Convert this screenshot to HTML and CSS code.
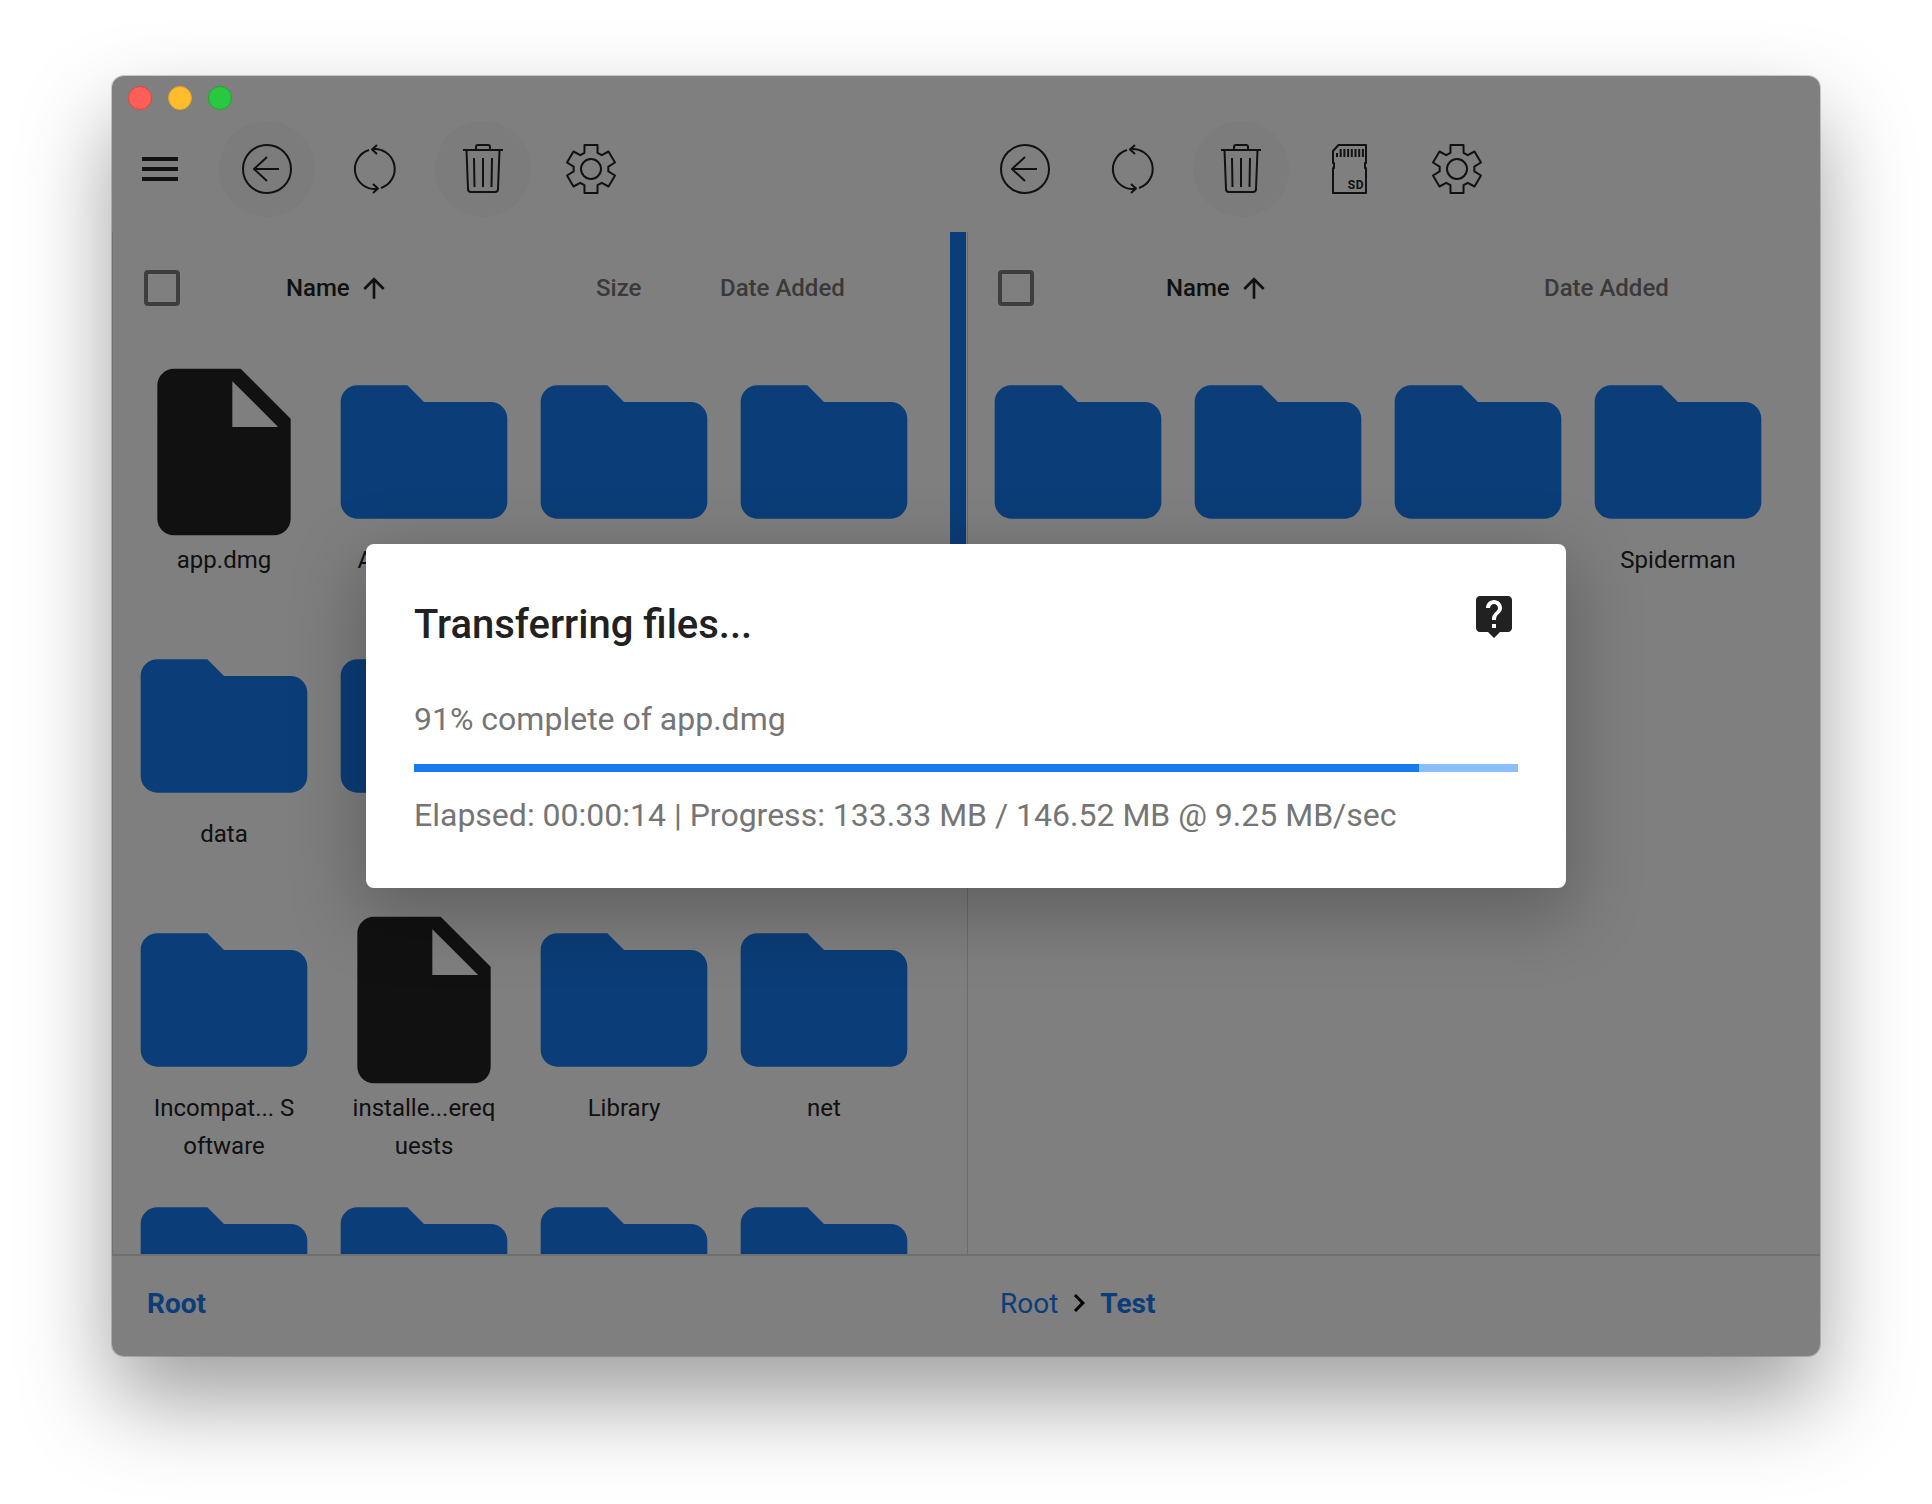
FILE: index.html
```html
<!DOCTYPE html>
<html lang="en">
<head>
    <meta charset="UTF-8">
    <title>Transferring files</title>
    <link rel="stylesheet" href="styles.css">
</head>
<body>
    <svg class="sprite" xmlns="http://www.w3.org/2000/svg">
        <symbol id="folder" viewBox="0 0 24 24"><path d="M10 4H4c-1.1 0-2 .9-2 2v12c0 1.1.9 2 2 2h16c1.1 0 2-.9 2-2V8c0-1.1-.9-2-2-2h-8z"/></symbol>
        <symbol id="file" viewBox="0 0 24 24"><path d="M6 2c-1.1 0-2 .9-2 2v16c0 1.1.9 2 2 2h12c1.1 0 2-.9 2-2V8l-6-6H6zm7 7V3.5L18.5 9H13z"/></symbol>
        <symbol id="arrow-up" viewBox="0 0 24 24"><path d="M4 12l1.41 1.41L11 7.83V20h2V7.83l5.58 5.59L20 12l-8-8-8 8z"/></symbol>
        <symbol id="back" viewBox="0 0 50 50"><g class="line"><circle cx="25" cy="25" r="24"/><path d="M37 25H12M25 13L12 25l13 12"/></g></symbol>
        <symbol id="refresh" viewBox="0 0 50 50"><g class="line"><path d="M22 5.200A20 20 0 0 1 31 44"/><path d="M27 45A20 20 0 0 1 19 6"/><path d="M27 1l-5 4.400 5 4.600M23 40l5 4.600-5 4.400"/></g></symbol>
        <symbol id="trash" viewBox="0 0 50 50"><g class="line"><path d="M5 6H45M18 5V3a2 2 0 0 1 2-2h10a2 2 0 0 1 2 2v2"/><path d="M8.500 6l1.500 39a3 3 0 0 0 3 3h24a3 3 0 0 0 3-3l1.500-39"/><path d="M16 14l.5 29M25 14v29M34 14l-.5 29"/></g></symbol>
        <symbol id="gear" viewBox="-25 -25 50 50"><g class="line"><path d="M-6.500-24H6.500L6.560-16.230 10.770-13.790 17.500-17.500 24-6.500 17.330-2.440V2.440L24 6.500 17.500 17.500 10.770 13.790 6.560 16.230 6.500 24H-6.500L-6.560 16.230-10.770 13.790-17.500 17.500-24 6.500-17.330 2.440V-2.440L-24-6.500-17.500-17.500-10.770-13.790-6.560-16.230Z"/><circle r="10"/></g></symbol>
        <symbol id="next" viewBox="0 0 24 24"><path d="M10 6L8.590 7.410 13.170 12l-4.580 4.590L10 18l6-6z"/></symbol>
        <symbol id="help" viewBox="0 0 24 24"><path d="M19 2H5c-1.110 0-2 .9-2 2v14c0 1.100.89 2 2 2h4l3 3 3-3h4c1.100 0 2-.9 2-2V4c0-1.100-.9-2-2-2zm-6 16h-2v-2h2v2zm2.070-7.750l-.9.920C13.450 11.900 13 12.500 13 14h-2v-.5c0-1.100.45-2.100 1.170-2.830l1.240-1.260c.37-.36.59-.86.59-1.410 0-1.100-.9-2-2-2s-2 .9-2 2H8c0-2.210 1.790-4 4-4s4 1.790 4 4c0 .88-.36 1.680-.93 2.250z"/></symbol>
    </svg>

    <div class="window">
        <div class="traffic-lights">
            <span class="light red"></span>
            <span class="light yellow"></span>
            <span class="light green"></span>
        </div>

        <div class="toolbar toolbar-left">
            <div class="menu-btn"><span></span><span></span><span></span></div>
            <div class="tool-btn hover"><svg><use href="#back"/></svg></div>
            <div class="tool-btn"><svg><use href="#refresh"/></svg></div>
            <div class="tool-btn hover"><svg><use href="#trash"/></svg></div>
            <div class="tool-btn"><svg><use href="#gear"/></svg></div>
        </div>
        <div class="toolbar toolbar-right">
            <div class="tool-btn"><svg><use href="#back"/></svg></div>
            <div class="tool-btn"><svg><use href="#refresh"/></svg></div>
            <div class="tool-btn hover"><svg><use href="#trash"/></svg></div>
            <div class="tool-btn">
                <svg viewBox="0 0 36 50" class="sd-icon">
                    <g class="line">
                        <path d="M2 49V24H3V19H2V7L7.500 1H35V19H34V24H35V49Z"/>
                        <path d="M6 9v4M9.700 5v8M13.400 5v8M17.100 5v8M20.800 5v8M24.500 5v8M28.200 5v8M31.900 5v8" stroke-width="2"/>
                    </g>
                    <text x="33" y="45" text-anchor="end" class="sd-label">SD</text>
                </svg>
            </div>
            <div class="tool-btn"><svg><use href="#gear"/></svg></div>
        </div>

        <div class="pane pane-left">
            <div class="list-header">
                <div class="col-check"><span class="checkbox"></span></div>
                <div class="col-name">Name <svg class="sort-icon"><use href="#arrow-up"/></svg></div>
                <div class="col-size">Size</div>
                <div class="col-date">Date Added</div>
            </div>
            <div class="grid">
                <div class="item"><svg class="doc"><use href="#file"/></svg><div class="label">app.dmg</div></div>
                <div class="item"><svg class="dir"><use href="#folder"/></svg><div class="label">Applications</div></div>
                <div class="item"><svg class="dir"><use href="#folder"/></svg><div class="label"></div></div>
                <div class="item"><svg class="dir"><use href="#folder"/></svg><div class="label"></div></div>

                <div class="item"><svg class="dir"><use href="#folder"/></svg><div class="label">data</div></div>
                <div class="item"><svg class="dir"><use href="#folder"/></svg><div class="label"></div></div>
                <div class="item"></div>
                <div class="item"></div>

                <div class="item"><svg class="dir"><use href="#folder"/></svg><div class="label">Incompat... S<br>oftware</div></div>
                <div class="item"><svg class="doc"><use href="#file"/></svg><div class="label">installe...ereq<br>uests</div></div>
                <div class="item"><svg class="dir"><use href="#folder"/></svg><div class="label">Library</div></div>
                <div class="item"><svg class="dir"><use href="#folder"/></svg><div class="label">net</div></div>

                <div class="item"><svg class="dir"><use href="#folder"/></svg></div>
                <div class="item"><svg class="dir"><use href="#folder"/></svg></div>
                <div class="item"><svg class="dir"><use href="#folder"/></svg></div>
                <div class="item"><svg class="dir"><use href="#folder"/></svg></div>
            </div>
            <div class="splitter"></div>
        </div>

        <div class="pane pane-right">
            <div class="list-header">
                <div class="col-check"><span class="checkbox"></span></div>
                <div class="col-name">Name <svg class="sort-icon"><use href="#arrow-up"/></svg></div>
                <div class="col-date">Date Added</div>
            </div>
            <div class="grid">
                <div class="item"><svg class="dir"><use href="#folder"/></svg><div class="label"></div></div>
                <div class="item"><svg class="dir"><use href="#folder"/></svg><div class="label"></div></div>
                <div class="item"><svg class="dir"><use href="#folder"/></svg><div class="label"></div></div>
                <div class="item"><svg class="dir"><use href="#folder"/></svg><div class="label">Spiderman</div></div>
            </div>
        </div>

        <div class="footer footer-left">
            <span class="crumb current">Root</span>
        </div>
        <div class="footer footer-right">
            <span class="crumb">Root</span>
            <svg class="crumb-sep"><use href="#next"/></svg>
            <span class="crumb current">Test</span>
        </div>

        <div class="overlay">
            <div class="dialog">
                <div class="dialog-title">
                    <h2>Transferring files...</h2>
                    <svg class="help-icon"><use href="#help"/></svg>
                </div>
                <p class="dialog-text status">91% complete of app.dmg</p>
                <div class="progress"><div class="progress-fill"></div></div>
                <p class="dialog-text">Elapsed: 00:00:14 | Progress: 133.33 MB / 146.52 MB @ 9.25 MB/sec</p>
            </div>
        </div>
    </div>
</body>
</html>
```
FILE: styles.css
```css
body {
    margin: 0;
    width: 1932px;
    height: 1504px;
    padding: 76px 0 0 112px;
    box-sizing: border-box;
    background: #fff;
    font-family: Roboto, "Liberation Sans", sans-serif;
    overflow: hidden;
}

.sprite {
    display: none;
}

.line {
    fill: none;
    stroke: currentColor;
    stroke-width: 2;
    stroke-linejoin: round;
}

/* window */
.window {
    position: relative;
    width: 1708px;
    height: 1280px;
    display: grid;
    grid-template-columns: 856px 852px;
    grid-template-rows: 156px 1022px 102px;
    background: #fff;
    border-radius: 12px;
    box-shadow: 0 0 0 1px rgba(0, 0, 0, 0.18), 0 44px 90px rgba(0, 0, 0, 0.38);
    color: #222;
}

.traffic-lights {
    position: absolute;
    z-index: 3;
    top: 10px;
    left: 16px;
    display: flex;
    gap: 16px;
}

.light {
    width: 24px;
    height: 24px;
    box-sizing: border-box;
    border-radius: 50%;
    border: 1px solid;
}

.red { background: #ff5f57; border-color: #e0443e; }
.yellow { background: #ffbd2e; border-color: #dea123; }
.green { background: #28c940; border-color: #1aab29; }

/* toolbars */
.toolbar {
    display: flex;
    align-items: center;
    gap: 12px;
    padding-top: 45px;
    padding-bottom: 15px;
}

.toolbar-right {
    padding-left: 9px;
}

.menu-btn {
    width: 96px;
    height: 96px;
    margin-right: -1px;
    display: flex;
    flex-direction: column;
    justify-content: center;
    align-items: center;
    gap: 6px;
}

.menu-btn span {
    width: 36px;
    height: 4px;
    background: #222;
}

.tool-btn {
    width: 96px;
    height: 96px;
    border-radius: 50%;
    display: flex;
    align-items: center;
    justify-content: center;
}

.tool-btn svg {
    width: 50px;
    height: 50px;
}

.tool-btn.hover {
    background: #f8f8f8;
}

.sd-label {
    font-family: Roboto, sans-serif;
    font-size: 12px;
    font-weight: 700;
    letter-spacing: 0.5px;
    fill: #222;
}

/* file panes */
.pane {
    position: relative;
    overflow: hidden;
    box-sizing: border-box;
}

.pane-left {
    border-left: 1px solid #e0e0e0;
    border-right: 1px solid #d6d6d6;
}

.list-header {
    height: 112px;
    display: flex;
    align-items: center;
    font-size: 24px;
    font-weight: 500;
    color: #757575;
}

.pane-left .list-header {
    padding-left: 31px;
}

.pane-right .list-header {
    padding-left: 30px;
}

.col-check {
    flex: none;
    display: flex;
}

.pane-left .col-check { width: 142px; }
.pane-right .col-check { width: 168px; }

.checkbox {
    width: 36px;
    height: 36px;
    box-sizing: border-box;
    border: 4px solid #7c7c7c;
    border-radius: 4px;
}

.col-name {
    flex: none;
    display: flex;
    align-items: center;
    gap: 8px;
    color: #222;
}

.pane-left .col-name { width: 310px; }
.pane-right .col-name { width: 378px; }

.col-size {
    width: 124px;
}

.sort-icon {
    width: 32px;
    height: 32px;
    fill: #222;
}

.grid {
    display: grid;
    grid-template-columns: repeat(4, 200px);
    grid-auto-rows: 274px;
    padding-top: 8px;
}

.pane-left .grid {
    padding-left: 11px;
}

.pane-right .grid {
    padding-left: 10px;
}

.item {
    text-align: center;
}

.item svg {
    display: block;
    width: 200px;
    height: 200px;
}

.dir {
    fill: #167af0;
}

.doc {
    fill: #222;
}

.label {
    margin-top: -11px;
    font-size: 24px;
    line-height: 38px;
    white-space: nowrap;
}

.splitter {
    position: absolute;
    top: 0;
    right: 1px;
    width: 16px;
    height: 400px;
    background: #167af0;
}

/* footer */
.footer {
    display: flex;
    align-items: center;
    box-sizing: border-box;
    border-top: 2px solid #dedede;
    padding-bottom: 6px;
    font-size: 28px;
    color: #167af0;
}

.footer-left {
    padding-left: 35px;
}

.footer-right {
    padding-left: 32px;
}

.crumb.current {
    font-weight: 700;
}

.crumb-sep {
    width: 36px;
    height: 36px;
    margin: 0 3px;
    fill: #000;
}

/* dialog */
.overlay {
    position: absolute;
    z-index: 2;
    inset: 0;
    display: flex;
    align-items: center;
    justify-content: center;
    border-radius: 12px;
    background: rgba(0, 0, 0, 0.5);
}

.dialog {
    width: 1200px;
    height: 344px;
    box-sizing: border-box;
    padding: 48px 48px 0;
    background: #fff;
    border-radius: 8px;
    box-shadow: 0 22px 70px 8px rgba(0, 0, 0, 0.24);
}

.dialog-title {
    display: flex;
    justify-content: space-between;
    height: 64px;
}

.dialog-title h2 {
    margin: 0;
    font-size: 40px;
    line-height: 66px;
    font-weight: 500;
    color: #212121;
}

.help-icon {
    width: 48px;
    height: 48px;
    fill: #212121;
}

.dialog-text {
    margin: 0;
    font-size: 32px;
    line-height: 44px;
    color: #757575;
}

.status {
    margin-top: 41px;
}

.progress {
    height: 8px;
    margin: 23px 0 21px;
    background: #8cbff7;
}

.progress-fill {
    width: 91%;
    height: 100%;
    background: #167af0;
}
```
